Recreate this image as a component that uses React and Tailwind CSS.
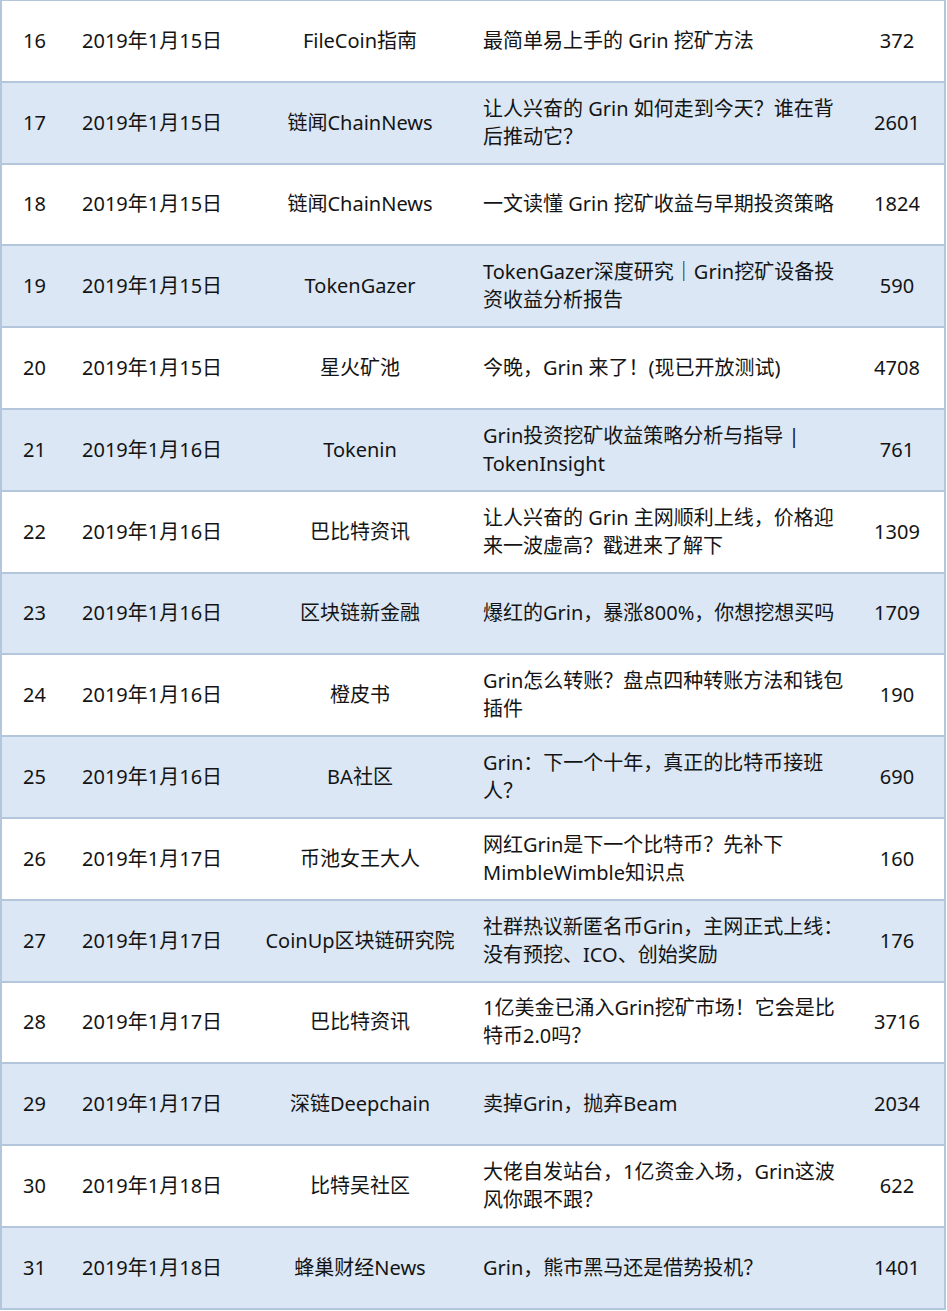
const rows = [
    { no: 16, date: "2019年1月15日", src: "FileCoin指南", title: ["最简单易上手的 Grin 挖矿方法"], n: 372 },
    { no: 17, date: "2019年1月15日", src: "链闻ChainNews", title: ["让人兴奋的 Grin 如何走到今天？谁在背", "后推动它？"], n: 2601 },
    { no: 18, date: "2019年1月15日", src: "链闻ChainNews", title: ["一文读懂 Grin 挖矿收益与早期投资策略"], n: 1824 },
    { no: 19, date: "2019年1月15日", src: "TokenGazer", title: ["TokenGazer深度研究｜Grin挖矿设备投", "资收益分析报告"], n: 590 },
    { no: 20, date: "2019年1月15日", src: "星火矿池", title: ["今晚，Grin 来了！(现已开放测试)"], n: 4708 },
    { no: 21, date: "2019年1月16日", src: "Tokenin", title: ["Grin投资挖矿收益策略分析与指导 |", "TokenInsight"], n: 761 },
    { no: 22, date: "2019年1月16日", src: "巴比特资讯", title: ["让人兴奋的 Grin 主网顺利上线，价格迎", "来一波虚高？戳进来了解下"], n: 1309 },
    { no: 23, date: "2019年1月16日", src: "区块链新金融", title: ["爆红的Grin，暴涨800%，你想挖想买吗"], n: 1709 },
    { no: 24, date: "2019年1月16日", src: "橙皮书", title: ["Grin怎么转账？盘点四种转账方法和钱包", "插件"], n: 190 },
    { no: 25, date: "2019年1月16日", src: "BA社区", title: ["Grin：下一个十年，真正的比特币接班", "人？"], n: 690 },
    { no: 26, date: "2019年1月17日", src: "币池女王大人", title: ["网红Grin是下一个比特币？先补下", "MimbleWimble知识点"], n: 160 },
    { no: 27, date: "2019年1月17日", src: "CoinUp区块链研究院", title: ["社群热议新匿名币Grin，主网正式上线：", "没有预挖、ICO、创始奖励"], n: 176 },
    { no: 28, date: "2019年1月17日", src: "巴比特资讯", title: ["1亿美金已涌入Grin挖矿市场！它会是比", "特币2.0吗？"], n: 3716 },
    { no: 29, date: "2019年1月17日", src: "深链Deepchain", title: ["卖掉Grin，抛弃Beam"], n: 2034 },
    { no: 30, date: "2019年1月18日", src: "比特吴社区", title: ["大佬自发站台，1亿资金入场，Grin这波", "风你跟不跟？"], n: 622 },
    { no: 31, date: "2019年1月18日", src: "蜂巢财经News", title: ["Grin，熊市黑马还是借势投机？"], n: 1401 },
];

export default function App() {
    return (
        <div
            className="w-[947px] h-[1311px] bg-white text-[20px] text-[#141414]"
            style={{ fontFamily: '"Noto Sans", "Noto Sans CJK SC", sans-serif' }}
        >
            <div className="w-[946px] border-x-2 border-t border-[#b3c6db]">
                {rows.map((r, i) => (
                    <div
                        key={r.no}
                        className={`h-[81.8px] flex items-center border-b-2 border-[#b3c6db] ${
                            i % 2 === 1 ? "bg-[#dbe7f4]" : "bg-white"
                        }`}
                    >
                        <div className="w-[80px] pl-[21px] whitespace-nowrap">{r.no}</div>
                        <div className="w-[168px] whitespace-nowrap">{r.date}</div>
                        <div className="w-[220px] text-center whitespace-nowrap">{r.src}</div>
                        <div className="w-[380px] pl-[13px] leading-[28px]">
                            {r.title.map((t) => (
                                <div key={t} className="whitespace-nowrap">
                                    {t}
                                </div>
                            ))}
                        </div>
                        <div className="flex-1 text-center">{r.n}</div>
                    </div>
                ))}
            </div>
        </div>
    );
}
